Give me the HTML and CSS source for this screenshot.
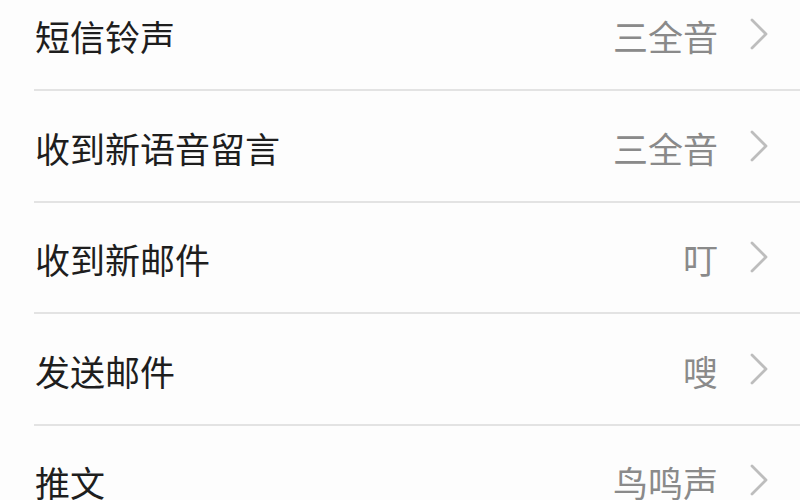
FILE: index.html
```html
<!DOCTYPE html>
<html lang="zh-CN">
<head>
<meta charset="utf-8">
<title>声音</title>
<link rel="stylesheet" href="styles.css">
</head>
<body>
<ul class="settings-list">
  <li class="row">
    <div class="row-inner">
      <span class="label">短信铃声</span>
      <span class="value">三全音</span>
      <svg class="chevron" viewBox="0 0 18 32" width="18" height="32"><polyline points="2,2 16,16 2,30"/></svg>
    </div>
  </li>
  <li class="row">
    <div class="row-inner">
      <span class="label">收到新语音留言</span>
      <span class="value">三全音</span>
      <svg class="chevron" viewBox="0 0 18 32" width="18" height="32"><polyline points="2,2 16,16 2,30"/></svg>
    </div>
  </li>
  <li class="row">
    <div class="row-inner">
      <span class="label">收到新邮件</span>
      <span class="value">叮</span>
      <svg class="chevron" viewBox="0 0 18 32" width="18" height="32"><polyline points="2,2 16,16 2,30"/></svg>
    </div>
  </li>
  <li class="row">
    <div class="row-inner">
      <span class="label">发送邮件</span>
      <span class="value">嗖</span>
      <svg class="chevron" viewBox="0 0 18 32" width="18" height="32"><polyline points="2,2 16,16 2,30"/></svg>
    </div>
  </li>
  <li class="row">
    <div class="row-inner">
      <span class="label">推文</span>
      <span class="value">鸟鸣声</span>
      <svg class="chevron" viewBox="0 0 18 32" width="18" height="32"><polyline points="2,2 16,16 2,30"/></svg>
    </div>
  </li>
</ul>
</body>
</html>
```
FILE: styles.css
```css
html, body {
  margin: 0;
  padding: 0;
  background: #fdfdfd;
  overflow: hidden;
}

body {
  font-family: "Noto Sans CJK SC", "Noto Sans", sans-serif;
}

.settings-list {
  list-style: none;
  margin: -20.5px 0 0 0;
  padding: 0;
}

.row {
  padding-left: 34px;
}

.row-inner {
  display: flex;
  align-items: center;
  height: 109.5px;
  border-bottom: 2px solid #e3e3e3;
  padding-right: 32px;
}

.label {
  flex: 1;
  font-size: 35px;
  line-height: 1;
  color: #1e1e1e;
  padding-left: 1px;
  padding-top: 3px;
}

.value {
  font-size: 35px;
  line-height: 1;
  color: #8a8a8a;
  margin-right: 32px;
  padding-top: 3px;
}

.chevron {
  display: block;
  fill: none;
  stroke: #bdbdbd;
  stroke-width: 2.8;
  stroke-linecap: round;
  stroke-linejoin: round;
}
```
